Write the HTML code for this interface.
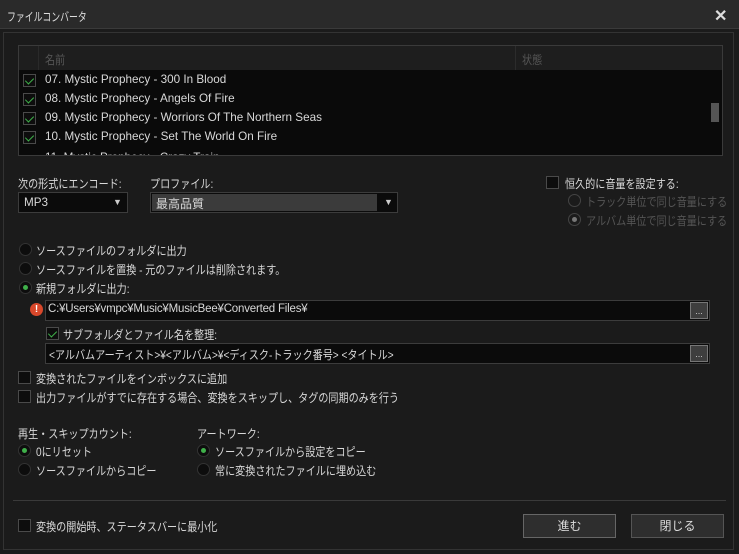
<!DOCTYPE html>
<html><head><meta charset="utf-8"><style>
*{box-sizing:border-box;margin:0;padding:0}
body{width:739px;height:554px;background:#1b1b1b;font-family:"Liberation Sans","Noto Sans CJK JP",sans-serif;font-size:12px;color:#d8d8d8;position:relative;overflow:hidden}
.a{position:absolute;white-space:nowrap}
.t{transform:scaleX(.84);transform-origin:0 0}
.l{font-size:11.7px}
.cb{position:absolute;width:13px;height:13px;background:#0d0d0d;border:1px solid #4a4a4a}
.ck::after{content:"";position:absolute;left:3px;top:1px;width:4px;height:7px;border:solid #3fb04a;border-width:0 1.5px 1.5px 0;transform:rotate(45deg)}
.rd{position:absolute;width:13px;height:13px;border-radius:50%;background:#0d0d0d;border:1px solid #333}
.on::after{content:"";position:absolute;left:3px;top:3px;width:5px;height:5px;border-radius:50%;background:#3fb04a}
.dis{border-color:#444;background:transparent}
.dis.on::after{background:#777}
.inp{position:absolute;background:#0b0b0b;border:1px solid #3c3c3c}
.btn3{position:absolute;width:18px;height:17px;background:#3e3e3e;border:1px solid #777;color:#ccc;font-size:9px;text-align:center;line-height:16px}
.b{position:absolute;background:#2e2e2e;border:1px solid #666;text-align:center;line-height:22px;color:#ddd}
.ar{font-size:9px;color:#ccc}
</style></head><body>
<div class="a" style="left:0;top:0;width:739px;height:29px;background:#2a2a2a;border-bottom:1px solid #3a3a3a"></div>
<div class="a" style="left:7px;top:8px;color:#ddd;transform:scaleX(.74);transform-origin:0 0">ファイルコンバータ</div>
<div class="a" style="left:714px;top:6px;font-size:16px;font-weight:bold;color:#ddd">✕</div>
<div class="a" style="left:3px;top:32px;width:731px;height:518px;border:1px solid #333"></div>
<div class="a" style="left:18px;top:45px;width:705px;height:111px;border:1px solid #3a3a3a;background:#0a0a0a"></div>
<div class="a" style="left:19px;top:46px;width:703px;height:24px;background:#1e1e1e"></div>
<div class="a" style="left:515px;top:46px;width:1px;height:24px;background:#2c2c2c"></div>
<div class="a" style="left:38px;top:46px;width:1px;height:24px;background:#2a2a2a"></div>
<div class="a t" style="left:45px;top:51px;color:#555">名前</div>
<div class="a t" style="left:522px;top:51px;color:#555">状態</div>
<div class="cb ck" style="left:23px;top:74px"></div><div class="a l" style="left:45px;top:73px">07. Mystic Prophecy - 300 In Blood</div>
<div class="cb ck" style="left:23px;top:93px"></div><div class="a l" style="left:45px;top:92px">08. Mystic Prophecy - Angels Of Fire</div>
<div class="cb ck" style="left:23px;top:112px"></div><div class="a l" style="left:45px;top:111px">09. Mystic Prophecy - Worriors Of The Northern Seas</div>
<div class="cb ck" style="left:23px;top:131px"></div><div class="a l" style="left:45px;top:130px">10. Mystic Prophecy - Set The World On Fire</div>
<div class="a" style="left:19px;top:150px;width:500px;height:5px;overflow:hidden"><div class="l" style="margin-top:1px;padding-left:26px">11. Mystic Prophecy - Crazy Train</div></div>
<div class="a" style="left:711px;top:103px;width:8px;height:19px;background:#555"></div>
<div class="a t" style="left:18px;top:175px">次の形式にエンコード:</div>
<div class="inp" style="left:18px;top:192px;width:110px;height:21px"></div><div class="a l" style="left:24px;top:196px">MP3</div><div class="a ar" style="left:113px;top:197px">▼</div>
<div class="a t" style="left:150px;top:175px">プロファイル:</div>
<div class="inp" style="left:150px;top:192px;width:248px;height:21px"></div><div class="a" style="left:152px;top:194px;width:225px;height:17px;background:#3b3b3b"></div><div class="a" style="left:156px;top:195px;font-size:12px">最高品質</div><div class="a ar" style="left:384px;top:197px">▼</div>
<div class="cb" style="left:546px;top:176px"></div><div class="a t" style="left:565px;top:175px">恒久的に音量を設定する:</div>
<div class="rd dis" style="left:568px;top:194px"></div><div class="a t" style="left:586px;top:193px;color:#555">トラック単位で同じ音量にする</div>
<div class="rd dis on" style="left:568px;top:213px"></div><div class="a t" style="left:586px;top:212px;color:#555">アルバム単位で同じ音量にする</div>
<div class="rd" style="left:19px;top:243px"></div><div class="a t" style="left:36px;top:242px">ソースファイルのフォルダに出力</div>
<div class="rd" style="left:19px;top:262px"></div><div class="a t" style="left:36px;top:261px">ソースファイルを置換 - 元のファイルは削除されます。</div>
<div class="rd on" style="left:19px;top:281px"></div><div class="a t" style="left:36px;top:280px">新規フォルダに出力:</div>
<div class="a" style="left:30px;top:303px;width:13px;height:13px;border-radius:50%;background:#d9482b;color:#fff;font-size:10px;font-weight:bold;text-align:center;line-height:13px">!</div>
<div class="inp" style="left:45px;top:300px;width:665px;height:21px"></div><div class="a" style="left:48px;top:303px;font-size:11.5px;letter-spacing:-0.2px">C:¥Users¥vmpc¥Music¥MusicBee¥Converted Files¥</div><div class="btn3" style="left:690px;top:302px">...</div>
<div class="cb ck" style="left:46px;top:327px"></div><div class="a t" style="left:63px;top:326px">サブフォルダとファイル名を整理:</div>
<div class="inp" style="left:45px;top:343px;width:665px;height:21px"></div><div class="a t" style="left:49px;top:346px">&lt;アルバムアーティスト&gt;¥&lt;アルバム&gt;¥&lt;ディスク-トラック番号&gt; &lt;タイトル&gt;</div><div class="btn3" style="left:690px;top:345px">...</div>
<div class="cb" style="left:18px;top:371px"></div><div class="a t" style="left:36px;top:370px">変換されたファイルをインボックスに追加</div>
<div class="cb" style="left:18px;top:390px"></div><div class="a t" style="left:36px;top:389px">出力ファイルがすでに存在する場合、変換をスキップし、タグの同期のみを行う</div>
<div class="a t" style="left:18px;top:425px">再生・スキップカウント:</div>
<div class="rd on" style="left:18px;top:444px"></div><div class="a t" style="left:36px;top:443px">0にリセット</div>
<div class="rd" style="left:18px;top:463px"></div><div class="a t" style="left:36px;top:462px">ソースファイルからコピー</div>
<div class="a t" style="left:197px;top:425px">アートワーク:</div>
<div class="rd on" style="left:197px;top:444px"></div><div class="a t" style="left:215px;top:443px">ソースファイルから設定をコピー</div>
<div class="rd" style="left:197px;top:463px"></div><div class="a t" style="left:215px;top:462px">常に変換されたファイルに埋め込む</div>
<div class="a" style="left:13px;top:500px;width:713px;height:1px;background:#3a3a3a"></div>
<div class="cb" style="left:18px;top:519px"></div><div class="a t" style="left:36px;top:518px">変換の開始時、ステータスバーに最小化</div>
<div class="b" style="left:523px;top:514px;width:93px;height:24px">進む</div>
<div class="b" style="left:631px;top:514px;width:93px;height:24px;border-color:#555">閉じる</div>
</body></html>
